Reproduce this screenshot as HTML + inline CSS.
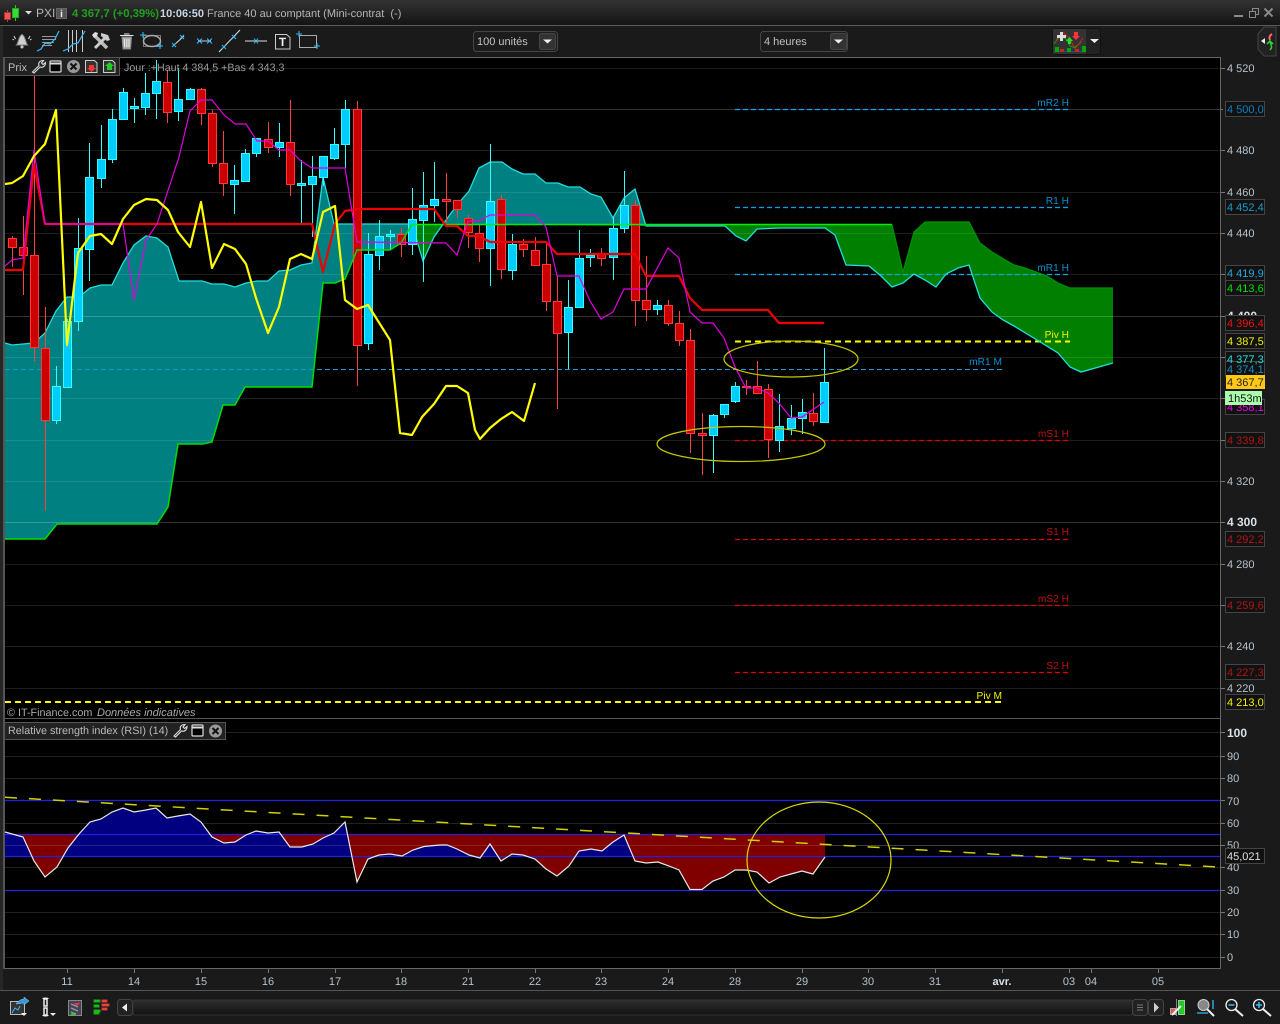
<!DOCTYPE html>
<html><head><meta charset="utf-8"><title>PXI</title>
<style>
html,body{margin:0;padding:0;background:#000;width:1280px;height:1024px;overflow:hidden}
svg{display:block;position:absolute;left:0;top:0}
text{font-family:"Liberation Sans",Arial,sans-serif;font-size:11px;text-rendering:geometricPrecision}
.ax{fill:#b4c2cc}
.tg{font-size:11px}
.pv{font-size:10.200px}
</style></head><body>
<svg width="1280" height="1024" viewBox="0 0 1280 1024" xmlns="http://www.w3.org/2000/svg">
<defs>
<linearGradient id="tb" x1="0" y1="0" x2="0" y2="1"><stop offset="0" stop-color="#333"/><stop offset="1" stop-color="#141414"/></linearGradient>
<linearGradient id="btn" x1="0" y1="0" x2="0" y2="1"><stop offset="0" stop-color="#2e2e2e"/><stop offset="1" stop-color="#111"/></linearGradient>
<clipPath id="pl"><rect x="5" y="58" width="1215" height="660"/></clipPath>
<clipPath id="rA"><rect x="5" y="834.3" width="1215" height="134"/></clipPath>
<clipPath id="bA"><rect x="5" y="720" width="1215" height="136.3"/></clipPath>
</defs>

<!-- window chrome -->
<rect width="1280" height="1024" fill="#1a1a1a"/>
<rect width="1280" height="25" fill="url(#tb)"/>
<rect y="25" width="1280" height="1" fill="#5a5a5a"/>
<rect x="5" y="58" width="1215" height="910" fill="#000"/>
<rect x="5" y="57" width="1215" height="1" fill="#666"/>
<rect x="1220" y="57" width="1" height="912" fill="#666"/>
<rect x="5" y="968" width="1216" height="1" fill="#666"/>
<rect x="0" y="26" width="3" height="964" fill="#262626"/>
<rect x="3" y="57" width="2" height="912" fill="#555"/>
<rect y="990" width="1280" height="1" fill="#555"/>
<rect x="5" y="718" width="1215" height="1" fill="#555"/>

<!-- title bar -->
<g>
<path d="M7.500 10V22" stroke="#c33" fill="none"/>
<rect x="4.500" y="12.500" width="6" height="7" fill="#e55" stroke="#a33"/>
<path d="M15.500 5V21" stroke="#2c2" fill="none"/>
<rect x="12.500" y="8.500" width="6" height="9" fill="#3d3" stroke="#2a2"/>
<path d="M25 11h7l-3.500 3.500z" fill="#ddd"/>
<text x="36" y="17" style="font-size:12px" fill="#b5b5b5">PXI</text>
<rect x="56.500" y="8.500" width="10" height="10" fill="#555" stroke="#666"/>
<text x="61.500" y="17" text-anchor="middle" style="font-size:10px;font-weight:bold" fill="#eee">i</text>
<text x="72" y="17" style="font-size:11.300px;font-weight:bold" fill="#1f9f1f">4 367,7 (+0,39%)</text>
<text x="160" y="17" style="font-size:11px;font-weight:bold" fill="#c5d5e5">10:06:50</text>
<text x="207" y="17" style="font-size:11px" fill="#b5b5b5">France 40 au comptant (Mini-contrat&#160;&#160;(-)</text>
<rect x="1234" y="15" width="9" height="2" fill="#8a8a8a"/>
<path d="M1249.500 11.500h6v6h-6zM1252.500 11.500v-3h6v6h-3" fill="none" stroke="#8a8a8a"/>
<path d="M1264.500 8.500l8 8M1272.500 8.500l-8 8" stroke="#8a8a8a" stroke-width="2" fill="none"/>
</g>

<!-- top toolbar icons -->
<g fill="none">
<!-- bell -->
<path d="M16.500 45c2-2 2-9 5.500-10.500C25.500 36 25.500 43 27.500 45z" fill="#cfcfcf" stroke="#888"/><circle cx="22" cy="47" r="1.500" fill="#ccc"/>
<path d="M14 36l1.500 3M30 36l-1.500 3M12.500 39l1.500 1M31.500 39l-1.500 1" stroke="#ddd"/>
<!-- chart lines -->
<path d="M42 36.500h14M42 39.500h14M42 42.500h12M42 45.500h10" stroke="#999"/>
<path d="M37 51l4-2 4-6 5 1 5-5 4-8" stroke="#33bbff" stroke-width="1.200"/>
<path d="M68.500 30v22M72.500 30v22M76.500 30v22M82.500 30v22" stroke="#ccc"/>
<path d="M63 51l5-2 5-5 5-1 4-7 3-5" stroke="#33bbff" stroke-width="1.200"/>
<!-- tools -->
<path d="M95 36l12 12" stroke="#bbb" stroke-width="3.500"/>
<path d="M106 37l-11 11" stroke="#ccc" stroke-width="3"/>
<path d="M101 33l7 2 2 5-3 1-6-5z" fill="#ccc"/>
<path d="M92 35l3-3 3 1-1 3-3 2z" fill="#ddd"/>
<!-- trash -->
<path d="M122 37h9.500l-1 12h-7.500z" fill="#aaa" stroke="#888"/><path d="M120 35.500h13.500M124 34h5.500M124.500 39v8M126.800 39v8M129 39v8" stroke="#e8e8e8"/>
<!-- ellipse -->
<rect x="143.500" y="35.500" width="17" height="11" stroke="#777"/><ellipse cx="152" cy="41" rx="8.500" ry="5.500" stroke="#aaa" stroke-width="1.500"/>
<path d="M143 32v6M140 35h6M160 43v6M157 46h6" stroke="#33bbff"/>
<!-- segment -->
<path d="M173 46l11-10" stroke="#ddd"/><path d="M172 43l4 4M176 43l-4 4M180 35l4 4M184 35l-4 4" stroke="#33bbff"/>
<!-- horizontal -->
<path d="M198 41h13" stroke="#ccc"/><path d="M197 38.500l5 5M202 38.500l-5 5M207 38.500l5 5M212 38.500l-5 5" stroke="#33bbff"/>
<!-- ray -->
<path d="M219 52l21-22" stroke="#ddd"/><path d="M222 45l4 4M226 45l-4 4M232 35l4 4M236 35l-4 4" stroke="#33bbff"/>
<!-- h line -->
<path d="M245 41h22" stroke="#ddd"/><path d="M254 38.500l4 5M258 38.500l-4 5" stroke="#33bbff"/>
<!-- text box -->
<path d="M275.500 34.500h11l3.500 3v11.500h-14.500z" stroke="#ccc"/>
<text x="282.500" y="46" text-anchor="middle" style="font-size:12px;font-weight:bold" fill="#eee">T</text>
<!-- rect -->
<rect x="299.500" y="35.500" width="17" height="12" stroke="#aaa"/>
<path d="M299 31v6M296 34h6M317 43v6M314 46h6" stroke="#33bbff"/>
</g>

<!-- combos -->
<rect x="473.500" y="31.500" width="84" height="20" rx="3" fill="#1c1c1c" stroke="#444"/>
<rect x="539.500" y="33.500" width="16" height="16" rx="2" fill="#333" stroke="#444"/>
<path d="M543 39.500h9l-4.500 4z" fill="#eee"/>
<text x="477" y="45" fill="#c0c0c0">100 unités</text>
<rect x="760.500" y="31.500" width="87" height="20" rx="3" fill="#1c1c1c" stroke="#444"/>
<rect x="830.500" y="33.500" width="16" height="16" rx="2" fill="#333" stroke="#444"/>
<path d="M834 39.500h9l-4.500 4z" fill="#eee"/>
<text x="764" y="45" fill="#c0c0c0">4 heures</text>

<!-- indicator button -->
<rect x="1052.500" y="28.500" width="48" height="26" rx="3" fill="#222" stroke="#111"/>
<rect x="1053" y="29" width="33" height="25" fill="#333"/>
<path d="M1054 44l6-8 6 3 4 7 5 2 6-6" stroke="#0a0" fill="none"/>
<path d="M1056 40l7-8 7 7 4 8 4-2 5-7" stroke="#c22" fill="none"/>
<path d="M1054 51.500h31" stroke="#24a" fill="none"/>
<path d="M1055 47h4v5h-4zM1067 48h4v4h-4zM1082 46h4v6h-4z" fill="#0a0"/><path d="M1060 49h4v3h-4zM1075 49h4v3h-4z" fill="#c22"/>
<path d="M1057 35h3v-3h3v3h3v3h-3v3h-3v-3h-3z" fill="#ddd"/>
<path d="M1074 32h4v4h2l-4 4-4-4h2z" fill="#f33"/>
<path d="M1065 44h3v-3h-2l3.500-4 3.500 4h-2v3z" fill="#2d2"/>
<path d="M1090 39h9l-4.500 4z" fill="#eee"/>
<path d="M1276 27h-12l-6 7v15l6 7h12z" fill="#222" stroke="#444"/>
<path d="M1261 41l4-3v6z" fill="#eee"/>
<path d="M1272 34c-3 2-3 4-2 6" stroke="#f66" stroke-width="2" fill="none"/>
<path d="M1270 50c2-2 2-4 0-8M1267 44l3-3 3 3" stroke="#2d2" stroke-width="1.500" fill="none"/>

<!-- ===== PRICE CHART ===== -->
<g clip-path="url(#pl)">
<!-- cloud fills -->
<path fill="#008080" d="M5 343L12 345L23 344L34 343L45 333L56 311L67 297L79 297L90 288L101 285L112 285L123 263L134 245L146 236L157 238L168 247L179 281L202 281L212 284L224 284L235 287L246 283L257 281L268 281L279 271L290 270L301 265L312 263L323 177L334 224L412 224L401 243L390 250L357 250L345 279L335 283L323 283L312 387L245 387L235 405L223 405L212 442L203 444L178 444L168 507L157 524L57 524L45 539L5 539Z"/>
<path fill="#008080" d="M443 224L446 220L457 205L469 191L479 168L490 162L502 162L512 169L523 174L535 174L546 183L558 183L568 187L580 187L591 194L601 197L613 218L624 198L635 189L646 226Z"/>
<path fill="#007f00" d="M412 224L423 261L434 237L443 224Z"/>
<path fill="#007f00" d="M646 224L892 224L903 272L914 232L925 222L969 222L980 243L992 252L1014 265L1025 268L1047 276L1058 283L1070 288L1113 288L1113 363L1081 372L1070 367L1058 353L1037 340L1014 326L1003 320L992 312L980 298L969 265L958 268L946 274L936 287L925 280L914 274L903 283L892 287L881 276L869 266L846 265L835 235L825 228L780 228L757 229L746 241L736 236L725 226L646 226Z"/>
<!-- grid -->
<g fill="none" stroke="#fff" stroke-opacity=".11">
<path d="M5 68.500H1220M5 150.500H1220M5 192.500H1220M5 233.500H1220M5 274.500H1220M5 357.500H1220M5 398.500H1220M5 440.500H1220M5 481.500H1220M5 564.500H1220M5 605.500H1220M5 646.500H1220M5 688.500H1220"/>
</g>
<g fill="none" stroke="#fff" stroke-opacity=".2">
<path d="M5 109.500H1220M5 316.500H1220M5 522.500H1220"/>
</g>
<!-- pivots -->
<g fill="none">
<path d="M735 109.500H1070M735 207.500H1070M735 274.500H1070" stroke="#00a8f0" stroke-width="1.300" stroke-dasharray="5 3"/>
<path d="M5 369.500H1003" stroke="#1a9acc" stroke-dasharray="5 3"/>
<path d="M735 440.500H1070M735 539.500H1070M735 605.500H1070M735 672.500H1070" stroke="#e00000" stroke-width="1.300" stroke-dasharray="5 3"/>
<path d="M735 341.500H1070" stroke="#ffff00" stroke-width="2" stroke-dasharray="6 4"/>
<path d="M5 702H1003" stroke="#ffff00" stroke-width="2" stroke-dasharray="6 4"/>
</g>
<!-- cyan span -->
<path fill="none" stroke="#22dddd" stroke-width="1.300" d="M5 343L12 345L23 344L34 343L45 333L56 311L67 297L79 297L90 288L101 285L112 285L123 263L134 245L146 236L157 238L168 247L179 281L202 281L212 284L224 284L235 287L246 283L257 281L268 281L279 271L290 270L301 265L312 263L323 177L334 224L412 224L423 261L434 237L446 220L457 205L469 191L479 168L490 162L502 162L512 169L523 174L535 174L546 183L558 183L568 187L580 187L591 194L601 197L613 218L624 198L635 189L646 226L725 226L736 236L746 241L757 229L780 228L825 228L835 235L846 265L869 266L881 276L892 287L903 283L914 274L925 280L936 287L946 274L958 268L969 265L980 298L992 312L1003 320L1014 326L1037 340L1058 353L1070 367L1081 372L1113 363"/>
<!-- wicks -->
<path fill="none" stroke="#ff4040" d="M12.500 236V267M23.500 216V295M34.500 76V361M45.500 307V511M167.500 70V123M201.500 88V125M212.500 110V167M223.500 131V196M268.500 122V153M290.500 100V196M357.500 101V386M401.500 228V257M446.500 173V223M457.500 200V218M468.500 215V248M479.500 225V262M501.500 195V279M523.500 239V257M535.500 237V266M546.500 243V311M557.500 276V409M601.500 248V266M635.500 200V326M646.500 256V321M668.500 300V326M679.500 311V346M690.500 329V453M702.500 413V475M746.500 380V395M757.500 361V393M768.500 384V458M813.500 393V426"/>
<path fill="none" stroke="#33ffff" d="M56.500 366V424M67.500 319V388M78.500 218V331M89.500 143V281M101.500 125V188M112.500 109V163M123.500 88V119M134.500 98V123M145.500 73V115M156.500 60V119M178.500 68V121M190.500 88V100M234.500 165V214M245.500 149V181M256.500 138V157M279.500 123V157M301.500 160V223M312.500 156V237M323.500 156V186M334.500 128V160M345.500 100V168M368.500 233V350M379.500 220V270M390.500 230V249M412.500 188V255M423.500 172V282M434.500 162V222M490.500 144V286M512.500 234V280M568.500 280V369M579.500 230V307M590.500 249V267M613.500 217V280M624.500 171V233M657.500 300V315M713.500 414V473M724.500 404V418M735.500 382V403M779.500 394V452M791.500 405V435M802.500 399V434M824.500 348V422"/>
<!-- bodies -->
<path fill="#cc0000" stroke="#ff3a3a" d="M8.500 238.500h8V247.500h-8zM19.500 247.500h8V255.500h-8zM30.500 255.500h8V347.500h-8zM41.500 348.500h8V420.500h-8zM163.500 82.500h8V112.500h-8zM197.500 89.500h8V113.500h-8zM208.500 113.500h8V163.500h-8zM219.500 163.500h8V183.500h-8zM264.500 139.500h8V147.500h-8zM286.500 142.500h8V184.500h-8zM353.500 109.500h8V345.500h-8zM397.500 234.500h8V244.500h-8zM442.500 199.500h8V201.500h-8zM453.500 200.500h8V209.500h-8zM464.500 218.500h8V232.500h-8zM475.500 233.500h8V248.500h-8zM497.500 199.500h8V269.500h-8zM519.500 244.500h8V249.500h-8zM531.500 250.500h8V265.500h-8zM542.500 264.500h8V301.500h-8zM553.500 301.500h8V333.500h-8zM597.500 254.500h8V258.500h-8zM631.500 205.500h8V300.500h-8zM642.500 300.500h8V309.500h-8zM664.500 305.500h8V323.500h-8zM675.500 323.500h8V340.500h-8zM686.500 340.500h8V433.500h-8zM698.500 433.500h8V435.500h-8zM742.500 386.500h8V387.500h-8zM753.500 386.500h8V393.500h-8zM764.500 389.500h8V439.500h-8zM809.500 413.500h8V421.500h-8z"/>
<path fill="#00ccff" stroke="#33ffff" d="M52.500 386.500h8V420.500h-8zM63.500 321.500h8V387.500h-8zM74.500 248.500h8V321.500h-8zM85.500 177.500h8V249.500h-8zM97.500 159.500h8V178.500h-8zM108.500 119.500h8V159.500h-8zM119.500 92.500h8V119.500h-8zM130.500 106.500h8V108.500h-8zM141.500 93.500h8V107.500h-8zM152.500 81.500h8V93.500h-8zM174.500 99.500h8V111.500h-8zM186.500 89.500h8V99.500h-8zM230.500 180.500h8V184.500h-8zM241.500 153.500h8V181.500h-8zM252.500 138.500h8V153.500h-8zM275.500 142.500h8V147.500h-8zM297.500 183.500h8V185.500h-8zM308.500 176.500h8V184.500h-8zM319.500 156.500h8V177.500h-8zM330.500 144.500h8V158.500h-8zM341.500 109.500h8V144.500h-8zM364.500 254.500h8V343.500h-8zM375.500 236.500h8V255.500h-8zM386.500 234.500h8V236.500h-8zM408.500 219.500h8V244.500h-8zM419.500 205.500h8V220.500h-8zM430.500 199.500h8V205.500h-8zM486.500 201.500h8V248.500h-8zM508.500 244.500h8V270.500h-8zM564.500 307.500h8V332.500h-8zM575.500 258.500h8V307.500h-8zM586.500 255.500h8V257.500h-8zM609.500 228.500h8V257.500h-8zM620.500 205.500h8V228.500h-8zM653.500 305.500h8V309.500h-8zM709.500 415.500h8V435.500h-8zM720.500 404.500h8V414.500h-8zM731.500 386.500h8V401.500h-8zM775.500 426.500h8V440.500h-8zM787.500 418.500h8V428.500h-8zM798.500 412.500h8V418.500h-8zM820.500 382.500h8V422.500h-8z"/>
<!-- senkou B -->
<path fill="none" stroke="#00dd00" stroke-width="1.500" d="M5 539L45 539L57 524L157 524L168 507L178 444L203 444L212 442L223 405L235 405L245 387L312 387L323 283L335 283L345 279L357 250L390 250L401 243L412 224.500"/>
<path fill="none" stroke="#00f000" stroke-width="1.500" d="M412 224.500H892"/>
<path fill="none" stroke="#009000" stroke-width="1.200" d="M892 224.500L903 272L914 232L925 222L969 222L980 243L992 252L1014 265L1025 268L1047 276L1058 283L1070 288L1113 288"/>
<!-- kijun -->
<path fill="none" stroke="#f00000" stroke-width="2.200" stroke-linejoin="round" d="M5 270L23 270L34 165L45 224L312 224L323 272L335 224L345 211L357 209L434 209L446 226L457 226L468 236L479 236L490 242L546 242L557 254L635 254L646 276L679 276L690 298L702 310L768 310L779 323L824 323"/>
<!-- tenkan -->
<path fill="none" stroke="#e000e0" stroke-width="1.200" d="M5 266L12 260L23 258L34 150L45 224L123 224L134 300L146 240L157 224L179 157L190 111L201 100L212 100L224 115L235 124L246 124L257 141L268 141L279 150L290 150L301 161L312 168L345 168L357 242L446 243L457 255L468 221L479 221L490 215L535 215L546 227L557 276L579 276L590 301L601 319L613 312L624 289L646 289L668 248L679 258L690 312L702 323L713 323L724 338L735 367L746 388L757 388L768 393L779 403L791 418L802 417L824 402"/>
<!-- chikou -->
<path fill="none" stroke="#ffff00" stroke-width="2.200" stroke-linejoin="round" d="M5 184L12 183L23 176L34 156L45 144L56 110L67 345L78 253L90 236L101 234L112 244L123 219L134 205L146 199L157 200L168 210L178 232L190 247L201 202L212 268L224 244L235 249L246 264L256 298L268 333L279 307L290 259L301 254L312 259L323 212L335 206L345 300L357 309L368 305L390 340L400 433L412 435L422 417L434 404L446 386L457 386L468 393L475 430L480 439L490 428L501 419L512 412L524 421L535 383"/>
<!-- ellipses -->
<ellipse cx="791" cy="359" rx="67" ry="18" fill="none" stroke="#c8c800" stroke-width="1.200"/>
<ellipse cx="741" cy="444" rx="84" ry="17.500" fill="none" stroke="#c8c800" stroke-width="1.200"/>
</g>

<!-- pivot labels -->
<g text-anchor="end">
<text class="pv" x="1069" y="106" fill="#0b8fcf">mR2 H</text>
<text class="pv" x="1069" y="204" fill="#0b8fcf">R1 H</text>
<text class="pv" x="1069" y="271" fill="#0b8fcf">mR1 H</text>
<text class="pv" x="1069" y="338" fill="#f2f200">Piv H</text>
<text class="pv" x="1002" y="365" fill="#0b8fcf">mR1 M</text>
<text class="pv" x="1069" y="437" fill="#c01010">mS1 H</text>
<text class="pv" x="1069" y="535" fill="#c01010">S1 H</text>
<text class="pv" x="1069" y="602" fill="#c01010">mS2 H</text>
<text class="pv" x="1069" y="669" fill="#c01010">S2 H</text>
<text class="pv" x="1002" y="699" fill="#f2f200">Piv M</text>
</g>
<text x="7" y="716" fill="#aaa" style="font-size:10.800px">© IT-Finance.com</text>
<text x="97" y="716" fill="#aaa" style="font-style:italic">Données indicatives</text>

<!-- Prix box -->
<rect x="4.500" y="57.500" width="115" height="18" fill="#222" stroke="#555"/>
<text x="8" y="71" fill="#bbb" style="font-size:11px">Prix</text>
<g fill="none">
<path d="M32.500 72l6.500-6.500c-1-3 1-5 4.500-5l-2 2.500 1.500 1.500 2.500-2c0 3.500-2.500 5.500-5.500 4.500l-6 6z" stroke="#ddd" stroke-width="1.100"/>
<rect x="50" y="61" width="11" height="11" rx="1" stroke="#ddd" stroke-width="1.200" fill="#000"/><path d="M50 63.500h11" stroke="#ddd" stroke-width="2"/>
<circle cx="73.500" cy="66.500" r="6.500" fill="#999"/><path d="M70.500 63.500l6 6M76.500 63.500l-6 6" stroke="#111" stroke-width="2"/>
<path d="M85.500 60.500h9l2.500 2.500v9.500H85.500z" fill="#333" stroke="#ccc"/><path d="M89 65h5v3h2l-4.500 4-4.500-4h2z" fill="#f33"/>
<path d="M103.500 60.500h9l2.500 2.500v9.500h-11.500z" fill="#333" stroke="#ccc"/><path d="M109.500 62l4.500 4h-2v4h-5v-4h-2z" fill="#2c2"/>
</g>
<text x="124" y="71" fill="#9a9a9a" style="font-size:10.700px">Jour :+Haut 4 384,5 +Bas 4 343,3</text>

<!-- ===== RSI ===== -->
<path d="M226 732.500H1220M5 756.500H1220M5 778.500H1220M5 823.500H1220M5 845.500H1220M5 867.500H1220M5 912.500H1220M5 934.500H1220M5 957.500H1220" stroke="#222" fill="none"/>
<path clip-path="url(#bA)" fill="#000080" d="M5 856.300L5 832L23 837L34 861L45 877L57 867L68 848L79 834L90 822L101 819L112 812L123 808L134 812L146 810L156 808L167 818L178 816L190 814L201 822L212 837L224 843L235 842L246 835L256 831L268 833L279 832L290 847L302 847L313 844L323 838L334 833L345 822L357 882L368 859L379 855L390 854L402 856L413 850L424 846.500L440 845L447 845L457 849L469 855L480 858L490 844L501 861L512 854L523 855L535 859L546 869L557 876L569 866L579 851L591 849L602 851L613 842L624 835L635 861L646 863L658 862L669 866L679 870L825 870L825 856.300Z"/>
<path clip-path="url(#rA)" fill="#800000" d="M5 834.300L5 832L23 837L34 861L45 877L57 867L68 848L79 834L90 822L101 819L112 812L123 808L134 812L146 810L156 808L167 818L178 816L190 814L201 822L212 837L224 843L235 842L246 835L256 831L268 833L279 832L290 847L302 847L313 844L323 838L334 833L345 822L357 882L368 859L379 855L390 854L402 856L413 850L424 846.500L440 845L447 845L457 849L469 855L480 858L490 844L501 861L512 854L523 855L535 859L546 869L557 876L569 866L579 851L591 849L602 851L613 842L624 835L635 861L646 863L658 862L669 866L679 870L690 889.500L702 889.500L713 881L724 877L735 870L746 870L757 872L769 883L780 877L791 874L802 871L813 874L825 857L825 834.300Z"/>
<path d="M5 845.500H1220" stroke="#fff" stroke-opacity=".13" fill="none"/>
<path d="M5 800.500H1220M5 834.500H1220M5 856.500H1220M5 890.500H1220" stroke="#2222dd" stroke-width="1.200" fill="none"/>
<path fill="none" stroke="#e8e8e8" stroke-width="1.200" d="M5 832L23 837L34 861L45 877L57 867L68 848L79 834L90 822L101 819L112 812L123 808L134 812L146 810L156 808L167 818L178 816L190 814L201 822L212 837L224 843L235 842L246 835L256 831L268 833L279 832L290 847L302 847L313 844L323 838L334 833L345 822L357 882L368 859L379 855L390 854L402 856L413 850L424 846.500L440 845L447 845L457 849L469 855L480 858L490 844L501 861L512 854L523 855L535 859L546 869L557 876L569 866L579 851L591 849L602 851L613 842L624 835L635 861L646 863L658 862L669 866L679 870L690 889.500L702 889.500L713 881L724 877L735 870L746 870L757 872L769 883L780 877L791 874L802 871L813 874L825 857"/>
<path d="M5 797.300L1218 867" stroke="#d0d000" stroke-width="1.500" stroke-dasharray="12 12" fill="none"/>
<ellipse cx="819" cy="860" rx="72" ry="58" fill="none" stroke="#d8d800" stroke-width="1.200"/>
<rect x="4.500" y="722.500" width="221" height="17" fill="#222" stroke="#555"/>
<text x="8" y="734" fill="#bbb" style="font-size:10.800px">Relative strength index (RSI) (14)</text>
<g fill="none">
<path d="M174 736l6.500-6.500c-1-3 1-5 4.500-5l-2 2.500 1.500 1.500 2.500-2c0 3.500-2.500 5.500-5.500 4.500l-6 6z" stroke="#ddd" stroke-width="1.100"/>
<rect x="192" y="725" width="11" height="11" rx="1" stroke="#ddd" stroke-width="1.200" fill="#000"/><path d="M192 727.500h11" stroke="#ddd" stroke-width="2"/>
<circle cx="215.500" cy="731" r="6.500" fill="#999"/><path d="M212.500 728l6 6M218.500 728l-6 6" stroke="#111" stroke-width="2"/>
</g>

<!-- right axis ticks -->
<path stroke="#777" fill="none" d="M1221 68.500h4M1221 109.500h2M1221 150.500h4M1221 192.500h4M1221 233.500h4M1221 274.500h4M1221 316.500h4M1221 357.500h4M1221 398.500h4M1221 440.500h4M1221 481.500h4M1221 522.500h4M1221 564.500h4M1221 605.500h4M1221 646.500h4M1221 688.500h4M1221 732.500h4M1221 756.500h4M1221 778.500h4M1221 800.500h4M1221 823.500h4M1221 845.500h4M1221 867.500h4M1221 890.500h4M1221 912.500h4M1221 934.500h4M1221 957.500h4"/>
<g class="ax">
<text x="1227" y="72" class="ax">4 520</text>
<text x="1227" y="154" class="ax">4 480</text>
<text x="1227" y="196" class="ax">4 460</text>
<text x="1227" y="237" class="ax">4 440</text>
<text x="1227" y="320" style="font-size:12px;font-weight:bold" fill="#d8e0e8">4 400</text>
<text x="1227" y="485" class="ax">4 320</text>
<text x="1227" y="526" style="font-size:12px;font-weight:bold" fill="#d8e0e8">4 300</text>
<text x="1227" y="568" class="ax">4 280</text>
<text x="1227" y="650" class="ax">4 240</text>
<text x="1227" y="692" class="ax">4 220</text>
<text x="1227" y="737" style="font-size:12px;font-weight:bold" fill="#d8e0e8">100</text>
<text x="1227" y="760" class="ax">90</text>
<text x="1227" y="782" class="ax">80</text>
<text x="1227" y="805" class="ax">70</text>
<text x="1227" y="827" class="ax">60</text>
<text x="1227" y="849" class="ax">50</text>
<text x="1227" y="871" class="ax">40</text>
<text x="1227" y="894" class="ax">30</text>
<text x="1227" y="916" class="ax">20</text>
<text x="1227" y="938" class="ax">10</text>
<text x="1227" y="961" class="ax">0</text>
</g>

<!-- tags -->
<g fill="#111" stroke="#444">
<rect x="1225.500" y="101.500" width="39" height="15"/>
<rect x="1225.500" y="199.500" width="39" height="15"/>
<rect x="1225.500" y="265.500" width="39" height="15"/>
<rect x="1225.500" y="280.500" width="39" height="15"/>
<rect x="1225.500" y="315.500" width="39" height="15"/>
<rect x="1225.500" y="333.500" width="39" height="15"/>
<rect x="1225.500" y="351.500" width="39" height="15"/>
<rect x="1225.500" y="399.500" width="39" height="15"/>
<rect x="1225.500" y="361.500" width="39" height="15"/>
<rect x="1225.500" y="432.500" width="39" height="15"/>
<rect x="1225.500" y="531.500" width="39" height="15"/>
<rect x="1225.500" y="597.500" width="39" height="15"/>
<rect x="1225.500" y="664.500" width="39" height="15"/>
<rect x="1225.500" y="694.500" width="39" height="15"/>
<rect x="1225.500" y="848.500" width="39" height="15"/>
</g>
<text class="tg" x="1227" y="113" fill="#0b7fc0">4 500,0</text>
<text class="tg" x="1227" y="211" fill="#1a9acc">4 452,4</text>
<text class="tg" x="1227" y="277" fill="#22a8dd">4 419,9</text>
<text class="tg" x="1227" y="292" fill="#00e000">4 413,6</text>
<text class="tg" x="1227" y="327" fill="#ee1111">4 396,4</text>
<text class="tg" x="1227" y="345" fill="#eeee00">4 387,5</text>
<text class="tg" x="1227" y="363" fill="#22dddd">4 377,3</text>
<text class="tg" x="1227" y="411" fill="#ee00ee">4 358,1</text>
<text class="tg" x="1227" y="373" fill="#1a8cc0">4 374,1</text>
<rect x="1226" y="375" width="39" height="14" fill="#ffc814"/>
<text class="tg" x="1227" y="386" fill="#222">4 367,7</text>
<rect x="1225" y="391" width="37" height="14" fill="#aaffaa"/>
<text class="tg" x="1228" y="402" fill="#111">1h53m</text>
<text class="tg" x="1227" y="444" fill="#b01515">4 339,8</text>
<text class="tg" x="1227" y="543" fill="#b01515">4 292,2</text>
<text class="tg" x="1227" y="609" fill="#b01515">4 259,6</text>
<text class="tg" x="1227" y="676" fill="#b01515">4 227,3</text>
<text class="tg" x="1227" y="706" fill="#eeee00">4 213,0</text>
<text class="tg" x="1227" y="860" fill="#ddd">45,021</text>

<!-- x axis -->
<path stroke="#777" fill="none" d="M67.500 969v4M134.500 969v4M201.500 969v4M268.500 969v4M335.500 969v4M401.500 969v4M468.500 969v4M535.500 969v4M601.500 969v4M668.500 969v4M735.500 969v4M802.500 969v4M868.500 969v4M935.500 969v4M1002.500 969v4M1069.500 969v4M1091.500 969v4M1158.500 969v4"/>
<g text-anchor="middle" class="ax">
<text x="67" y="985" class="ax">11</text><text x="134" y="985" class="ax">14</text><text x="201" y="985" class="ax">15</text><text x="268" y="985" class="ax">16</text><text x="335" y="985" class="ax">17</text><text x="401" y="985" class="ax">18</text><text x="468" y="985" class="ax">21</text><text x="535" y="985" class="ax">22</text><text x="601" y="985" class="ax">23</text><text x="668" y="985" class="ax">24</text><text x="735" y="985" class="ax">28</text><text x="802" y="985" class="ax">29</text><text x="868" y="985" class="ax">30</text><text x="935" y="985" class="ax">31</text><text x="1002" y="985" style="font-size:11px;font-weight:bold" fill="#d8e0e8">avr.</text><text x="1069" y="985" class="ax">03</text><text x="1091" y="985" class="ax">04</text><text x="1158" y="985" class="ax">05</text>
</g>

<!-- bottom toolbar -->
<g fill="none">
<rect x="10.500" y="1001.500" width="14" height="13" fill="#333" stroke="#bbb"/>
<path d="M12 1013l3-5 3 2 2-4" stroke="#33bbff"/>
<path d="M16 1004c3-4 6-5 8-5v-2l5 4-5 4v-2c-3 0-5 1-8 1z" fill="#3399dd" stroke="#9cf" stroke-width=".5"/>
<path d="M21 1013h6l-3 3z" fill="#eee"/>
<path d="M44 999h3v7h-3zM44 1008h3v7h-3zM43 999c0-1 5-1 5 0M43 1015c0 1 5 1 5 0" stroke="#eee" stroke-width="1.500"/>
<path d="M50 1013h6l-3 3z" fill="#eee"/>
<rect x="68.500" y="1000.500" width="13" height="15" fill="#445" stroke="#888"/>
<path d="M71 1004l7 3M71 1008l7 3M71 1012l5 2" stroke="#aaa"/>
<path d="M74 1003l3 3 3-3z" fill="#f33"/><path d="M70 1015l3-3 3 3z" fill="#2c2"/>
<path d="M94 1000h6v2h-6zM94 1005h5v2h-5zM94 1010h6v2h-6zM94 1012h5v2h-5z" fill="#2c2" stroke="#1a1"/>
<path d="M102 1000h5v2h-5zM102 1004h7v2h-7zM102 1008h5v2h-5z" fill="#f55" stroke="#c33"/>
</g>
<rect x="117.500" y="999.500" width="15" height="16" rx="3" fill="#222" stroke="#444"/>
<path d="M122 1007.500l5-4v8z" fill="#eee"/>
<rect x="133" y="1000" width="1000" height="15" rx="2" fill="url(#btn)" stroke="#333"/>
<rect x="1132.500" y="999.500" width="15" height="16" rx="3" fill="#222" stroke="#444"/>
<path d="M1137 1005h6M1137 1007.500h6M1137 1010h6" stroke="#777"/>
<rect x="1148.500" y="999.500" width="15" height="16" rx="3" fill="#222" stroke="#444"/>
<path d="M1154 1002.500l5 5-5 5z" fill="#ccc"/>
<g fill="none">
<path d="M1176.500 999v17" stroke="#888"/><rect x="1178.500" y="1000.500" width="6" height="14" fill="#2c2" stroke="#9c9"/>
<rect x="1170.500" y="1008.500" width="5" height="6" fill="#d55" stroke="#aaa"/>
<path d="M1172 1015l9-9" stroke="#eee" stroke-width="2"/>
<circle cx="1203.500" cy="1005" r="5.500" fill="#888" stroke="#ccc"/><path d="M1207 1009l7 7" stroke="#eee" stroke-width="2"/>
<path d="M1197 1013h11M1213 1000v9" stroke="#33bbff" stroke-width="1.300"/>
<circle cx="1231.500" cy="1005" r="5.500" stroke="#eee" stroke-width="1.300"/><path d="M1235 1009l8 7" stroke="#eee" stroke-width="2"/><path d="M1228.500 1005h6" stroke="#33bbff" stroke-width="1.500"/>
<circle cx="1259" cy="1005" r="5.500" stroke="#eee" stroke-width="1.300"/><path d="M1263 1009l8 7" stroke="#eee" stroke-width="2"/><path d="M1256 1005h6M1259 1002v6" stroke="#33bbff" stroke-width="1.500"/>
</g>
</svg>
</body></html>
